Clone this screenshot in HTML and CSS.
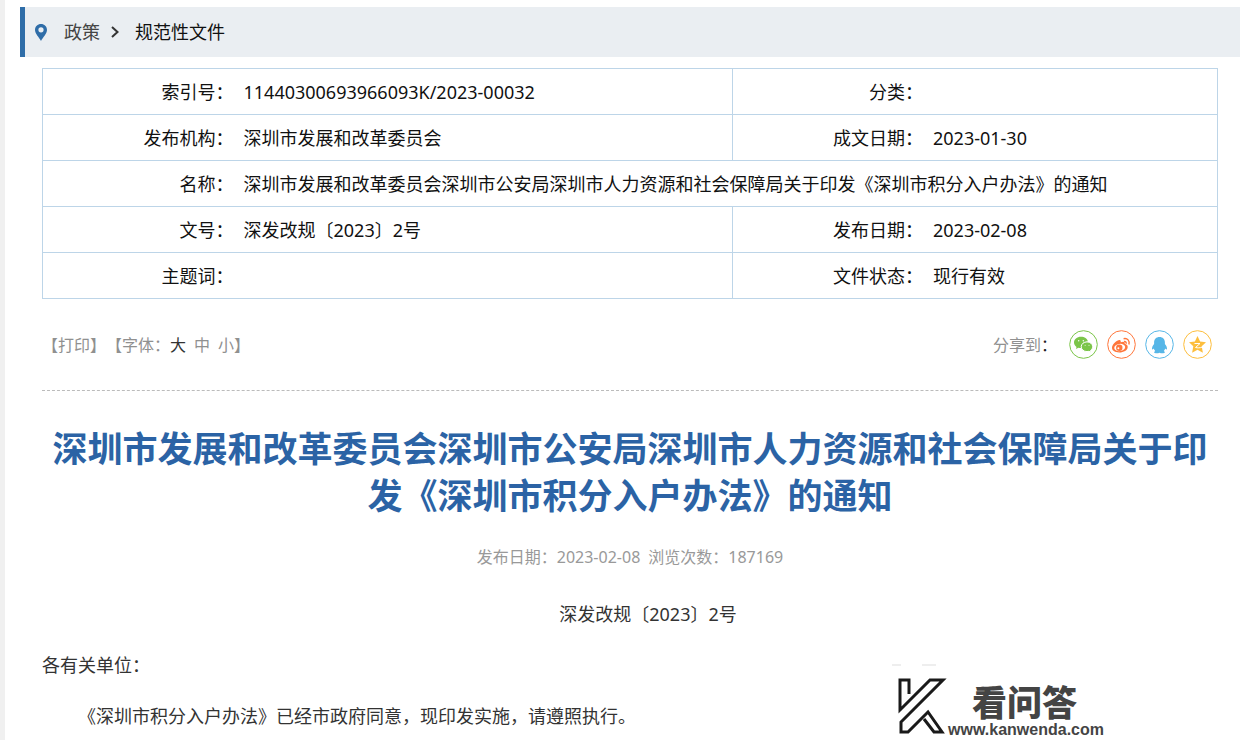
FILE: index.html
```html
<!DOCTYPE html>
<html lang="zh-CN">
<head>
<meta charset="utf-8">
<title>深圳市积分入户办法</title>
<link rel="stylesheet" href="styles.css">
</head>
<body>
<div class="page">
  <nav class="crumbs" aria-label="位置">
    <svg class="pin" viewBox="0 0 12 17" aria-hidden="true"><path fill-rule="evenodd" d="M6 0C2.600 0 0 2.600 0 5.900 0 9.500 4 13 6 17 8 13 12 9.500 12 5.900 12 2.600 9.400 0 6 0zM6 3.200a2.600 2.600 0 1 1 0 5.200 2.600 2.600 0 0 1 0-5.200z"/></svg>
    <a class="crumb" href="#">政策</a>
    <svg class="chevron" viewBox="0 0 8 12" aria-hidden="true"><path d="M1 1l5.500 5L1 11"/></svg>
    <a class="crumb current" href="#">规范性文件</a>
  </nav>
  <main class="content">
    <table class="meta">
      <tr><th scope="row">索引号：</th><td class="wide">11440300693966093K/2023-00032</td><th scope="row" class="split">分类：</th><td></td></tr>
      <tr><th scope="row">发布机构：</th><td>深圳市发展和改革委员会</td><th scope="row" class="split">成文日期：</th><td>2023-01-30</td></tr>
      <tr><th scope="row">名称：</th><td colspan="3">深圳市发展和改革委员会深圳市公安局深圳市人力资源和社会保障局关于印发《深圳市积分入户办法》的通知</td></tr>
      <tr><th scope="row">文号：</th><td>深发改规〔2023〕2号</td><th scope="row" class="split">发布日期：</th><td>2023-02-08</td></tr>
      <tr><th scope="row">主题词：</th><td></td><th scope="row" class="split">文件状态：</th><td>现行有效</td></tr>
    </table>
    <div class="tools">
      <div class="text-tools">
        <button type="button">【打印】</button>
        <span class="sizes">【字体：<button type="button" class="active">大</button><button type="button">中</button><button type="button">小</button>】</span>
      </div>
      <div class="share">
        <span class="share-label">分享到<b>：</b></span>
        <a class="wechat" href="#" aria-label="微信"><svg viewBox="0 0 29 29"><circle class="ring" cx="14.500" cy="14.500" r="13.800"/><path d="M12 6.800c-4 0-7 2.500-7 5.700 0 1.800 1 3.400 2.500 4.400L7 19l2.400-1.200c.8.200 1.700.3 2.600.3h.6c-.9-3.800 2.300-6.700 6.300-6.700-.5-2.700-3.400-4.600-6.900-4.600z"/><path class="outlined" d="M18 11.900c-3.300 0-5.800 2.100-5.800 4.800s2.500 4.900 5.800 4.900c.7 0 1.400-.1 2-.3l2 1-.5-1.800c1.300-.9 2.200-2.200 2.200-3.800 0-2.700-2.500-4.800-5.700-4.800z"/><g class="hole"><circle cx="9.700" cy="10.700" r=".7"/><circle cx="14.300" cy="10.700" r=".7"/><circle cx="16.100" cy="15.300" r=".5"/><circle cx="20" cy="15.300" r=".5"/></g></svg></a>
        <a class="weibo" href="#" aria-label="微博"><svg viewBox="0 0 29 29"><circle class="ring" cx="14.500" cy="14.500" r="13.800"/><path d="M11.500 10.300c1.500-.6 2.600 0 2.200 1.900 2.700-1 4.600-.6 4 1.600 2 .6 3 1.600 3 3.200 0 3.200-4 5.500-8.400 5.500S5 20.500 5 17.800c0-2.600 3-6.200 6.500-7.500z"/><ellipse class="hole" cx="12.700" cy="17.500" rx="5.500" ry="3.600" transform="rotate(-8 12.700 17.500)"/><circle cx="12.300" cy="17.700" r="3.200"/><circle class="hole" cx="11.400" cy="18.300" r="1"/><path class="wave" d="M17 11.500c1.600-.3 2.500.8 2.100 2.200M16.600 8.700c3.900-.8 6.400 2 5.300 5.800"/></svg></a>
        <a class="qq" href="#" aria-label="QQ"><svg viewBox="0 0 29 29"><circle class="ring" cx="14.500" cy="14.500" r="13.800"/><path d="M14.500 7c-3.300 0-5.400 2.200-5.400 5.400V14c-1.400 1.700-2.300 3.600-2.100 5.100.1.800.9.600 1.700-.5.300 1 .8 1.700 1.500 2.300-1.500.7-1.500 2.300.7 2.400 1.300.1 2.700-.1 3.600-.6.900.5 2.300.7 3.600.6 2.200-.1 2.200-1.700.7-2.400.7-.6 1.200-1.300 1.500-2.300.8 1.100 1.600 1.300 1.700.5.200-1.500-.7-3.400-2.100-5.100v-1.600c0-3.200-2.100-5.400-5.400-5.400z"/></svg></a>
        <a class="qzone" href="#" aria-label="QQ空间"><svg viewBox="0 0 29 29"><circle class="ring" cx="14.500" cy="14.500" r="13.800"/><path d="M14.500 6l2.600 5.500 5.900.7-4.300 4.100 1.200 6.400-5.400-2.900-5.400 2.900 1.200-6.400L6 12.200l5.900-.7z"/><path class="zed" d="M11.500 13.500h5.500l-4.500 4c2 .5 4.500.5 6.500-.3"/></svg></a>
      </div>
    </div>
    <article>
      <h1>深圳市发展和改革委员会深圳市公安局深圳市人力资源和社会保障局关于印发《深圳市积分入户办法》的通知</h1>
      <p class="info"><span>发布日期：2023-02-08</span><span>浏览次数：187169</span></p>
      <p class="docno">深发改规〔2023〕2号</p>
      <p>各有关单位：</p>
      <p class="indent">《深圳市积分入户办法》已经市政府同意，现印发实施，请遵照执行。</p>
    </article>
  </main>
  <div class="watermark">
    <svg class="mark" viewBox="0 0 56 76" aria-hidden="true"><path class="faint" d="M0 1h9M30 1h14"/><path d="M17 30V16H8v30L38 16h13L9 58v10h7l20-20 14 20h-8L32 55"/></svg>
    <div class="brand"><strong>看问答</strong><span>www.kanwenda.com</span></div>
  </div>
</div>
</body>
</html>
```
FILE: styles.css
```css
* { box-sizing: border-box; }
body {
  margin: 0;
  background: #fff;
  color: #111;
  font: 18px/26px "Noto Sans", "Noto Sans CJK SC", sans-serif;
}
.page {
  position: relative;
  min-height: 100vh;
  padding: 7px 5px 0 15px;
  border-left: 5px solid #f0f0f0;
  overflow: hidden;
}
a { color: inherit; text-decoration: none; }
button {
  padding: 0;
  border: 0;
  background: none;
  color: inherit;
  font: inherit;
  cursor: pointer;
}
.crumbs {
  display: flex;
  align-items: center;
  height: 50px;
  padding-left: 10px;
  border-left: 5px solid #2f6da8;
  background: #eaeef2;
}
.pin { width: 12px; height: 17px; margin-right: 17px; fill: #2f6da8; }
.crumb { color: #444; }
.crumb.current { color: #111; }
.chevron { width: 8px; height: 12px; margin: 0 16px 0 11px; fill: none; stroke: #333; stroke-width: 2; }
.content { padding: 11px 22px 0; }
.meta {
  width: 100%;
  border-collapse: collapse;
  border: 1px solid #bdd5e8;
}
.meta tr { height: 46px; border-bottom: 1px solid #bdd5e8; }
.meta th { width: 196px; padding: 0 5px 0 0; text-align: right; font-weight: 400; }
.meta td { padding: 0 5px; }
.meta .wide { width: 42%; }
.meta .split { border-left: 1px solid #bdd5e8; }
.tools {
  display: flex;
  justify-content: space-between;
  align-items: center;
  height: 92px;
  border-bottom: 1px dashed #bbb;
  color: #909090;
  font-size: 16px;
}
.text-tools, .share { display: flex; align-items: center; }
.sizes button { margin-right: 8px; }
.sizes button:last-child { margin-right: 0; }
.sizes .active { color: #333; }
.share { gap: 9px; padding-right: 6px; }
.share-label { margin-right: 3px; }
.share-label b { color: #222; font-weight: 400; }
.share a, .share svg { display: block; width: 29px; height: 29px; fill: currentColor; }
.share .ring { fill: none; stroke: currentColor; stroke-width: 1; }
.outlined { stroke: #fff; stroke-width: 1; }
.hole { fill: #fff; }
.wave { fill: none; stroke: currentColor; stroke-width: 1.4; }
.zed { fill: none; stroke: #fff; stroke-width: 1; }
.wechat { color: #7bc549; }
.weibo { color: #ff763b; }
.qq { color: #56b6e7; }
.qzone { color: #fdbe3d; }
h1 {
  margin: 34px 0 25px;
  color: #2b63a5;
  font-size: 35px;
  line-height: 47px;
  font-weight: 700;
  text-align: center;
  word-break: break-all;
}
p { margin: 0 0 25px; color: #333; }
.info {
  display: flex;
  justify-content: center;
  gap: 8px;
  margin-bottom: 31px;
  color: #999;
  font-size: 16px;
}
.docno { text-align: center; text-indent: 2em; }
.indent { margin: 0; text-indent: 2em; }
.watermark {
  position: absolute;
  top: 664px;
  right: 141px;
  display: flex;
}
.mark { width: 56px; height: 76px; fill: none; stroke: #1a1a1a; stroke-width: 3; }
.mark .faint { stroke: #ddd; stroke-width: 1; }
.brand {
  display: flex;
  flex-direction: column;
  align-items: flex-start;
  padding-top: 17px;
  color: #444;
}
.brand strong { margin-left: 24px; font-family: "Noto Sans CJK SC", sans-serif; font-size: 35px; line-height: 40px; font-weight: 900; }
.brand span { font: bold 16px/18px "Liberation Sans", sans-serif; }
```
